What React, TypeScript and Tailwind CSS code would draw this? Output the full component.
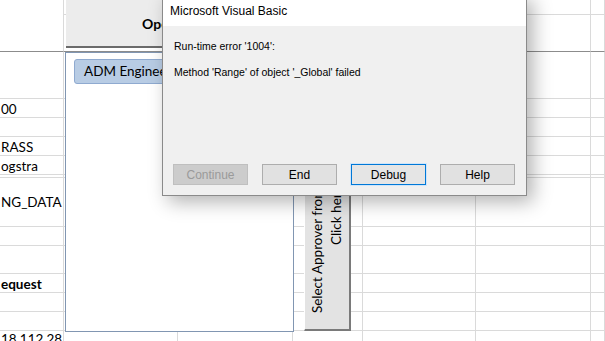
import React from 'react';

const colWidths = [64, 114, 115, 70, 113, 115, 14];
const rowHeights = [15, 37, 47, 19, 19, 19, 19, 3, 49, 19, 28, 19, 19, 19, 19];

const leftText: Record<number, { text: string; bold?: boolean; align?: string }> = {
    3: { text: '00' },
    5: { text: 'RASS' },
    6: { text: 'ogstra' },
    8: { text: 'NG_DATA', align: 'items-center' },
    11: { text: 'equest', bold: true },
    14: { text: '18.112.28', align: 'items-start' },
};

function SheetGrid() {
    return (
        <div className="flex flex-col">
            {rowHeights.map((h, r) => (
                <div key={r} className="flex" style={{ height: h }}>
                    {colWidths.map((w, c) => {
                        const cell = c === 0 ? leftText[r] : undefined;
                        const bottom =
                            r === 1
                                ? 'border-b border-b-[#8c8c8c]'
                                : c === 0 && r === 0
                                  ? ''
                                  : 'border-b border-b-[#dadada]';
                        return (
                            <div
                                key={c}
                                className={`flex shrink-0 overflow-hidden border-r border-r-[#dadada] ${bottom} ${cell?.align ?? 'items-end'}`}
                                style={{ width: w }}
                            >
                                {cell && (
                                    <span
                                        className={`whitespace-nowrap pl-[1px] text-[13.5px] leading-[16px] text-black ${cell.bold ? 'font-bold' : ''}`}
                                    >
                                        {cell.text}
                                    </span>
                                )}
                            </div>
                        );
                    })}
                </div>
            ))}
        </div>
    );
}

function DialogButton({ label, variant }: { label: string; variant?: 'disabled' | 'default' }) {
    const base = 'flex h-[21px] w-[75px] items-center justify-center text-[12px]';
    if (variant === 'disabled') {
        return <div className={`${base} border border-[#bfbfbf] bg-[#cccccc] text-[#9a9a9a]`}>{label}</div>;
    }
    if (variant === 'default') {
        return (
            <div className={`${base} border border-[#0078d7] bg-[#e5e5e5] text-black shadow-[0_0_0_1px_#cfe5fa]`}>
                {label}
            </div>
        );
    }
    return <div className={`${base} border border-[#adadad] bg-[#e1e1e1] text-black`}>{label}</div>;
}

export default function App() {
    return (
        <div className="relative h-[341px] w-[605px] overflow-hidden bg-white font-['Lato',sans-serif]">
            <SheetGrid />

            {/* form button above the list */}
            <div className="absolute left-[66px] top-0 flex h-[48px] w-[340px] items-center border-b-2 border-b-[#6b6b6b] bg-[#ececec] pl-[76px]">
                <span className="text-[14px] font-bold text-black">Open Form</span>
            </div>

            {/* list box */}
            <div className="absolute left-[65px] top-[52px] h-[280px] w-[229px] border border-[#8196b2] bg-white pl-[8px] pt-[6px]">
                <div className="flex h-[25px] w-[260px] items-center rounded-[3px] border border-[#8faad0] bg-[#b8cce4] pl-[9px] text-[13.5px] text-black">
                    ADM Engineering
                </div>
            </div>

            {/* approver button */}
            <div className="absolute left-[304px] top-[102px] flex h-[229px] w-[47px] items-center justify-center border-b-2 border-l border-r-2 border-t border-b-[#7a7a7a] border-l-white border-r-[#7a7a7a] border-t-white bg-[#e3e3e3]">
                <div className="rotate-180 text-center text-[13.5px] leading-[19px] text-black [writing-mode:vertical-rl]">
                    <div className="whitespace-nowrap">Select Approver from the list box</div>
                    <div className="whitespace-nowrap">Click here</div>
                </div>
            </div>

            {/* VBA runtime error dialog */}
            <div className="absolute left-[162px] top-[-6px] flex h-[202px] w-[365px] flex-col border border-[#8a8a8a] bg-[#f0f0f0] font-['Liberation_Sans',sans-serif] shadow-[6px_6px_18px_rgba(0,0,0,0.3)]">
                <div className="flex h-[31px] items-center bg-white pl-[7px] text-[12px] text-black">
                    Microsoft Visual Basic
                </div>
                <div className="flex flex-col gap-[13px] pl-[11px] pt-[14px] text-[10.5px] leading-[13px] text-black">
                    <span>Run-time error '1004':</span>
                    <span>Method 'Range' of object '_Global' failed</span>
                </div>
                <div className="mt-auto mb-[10px] flex gap-[14px] pl-[10px]">
                    <DialogButton label="Continue" variant="disabled" />
                    <DialogButton label="End" />
                    <DialogButton label="Debug" variant="default" />
                    <DialogButton label="Help" />
                </div>
            </div>
        </div>
    );
}
